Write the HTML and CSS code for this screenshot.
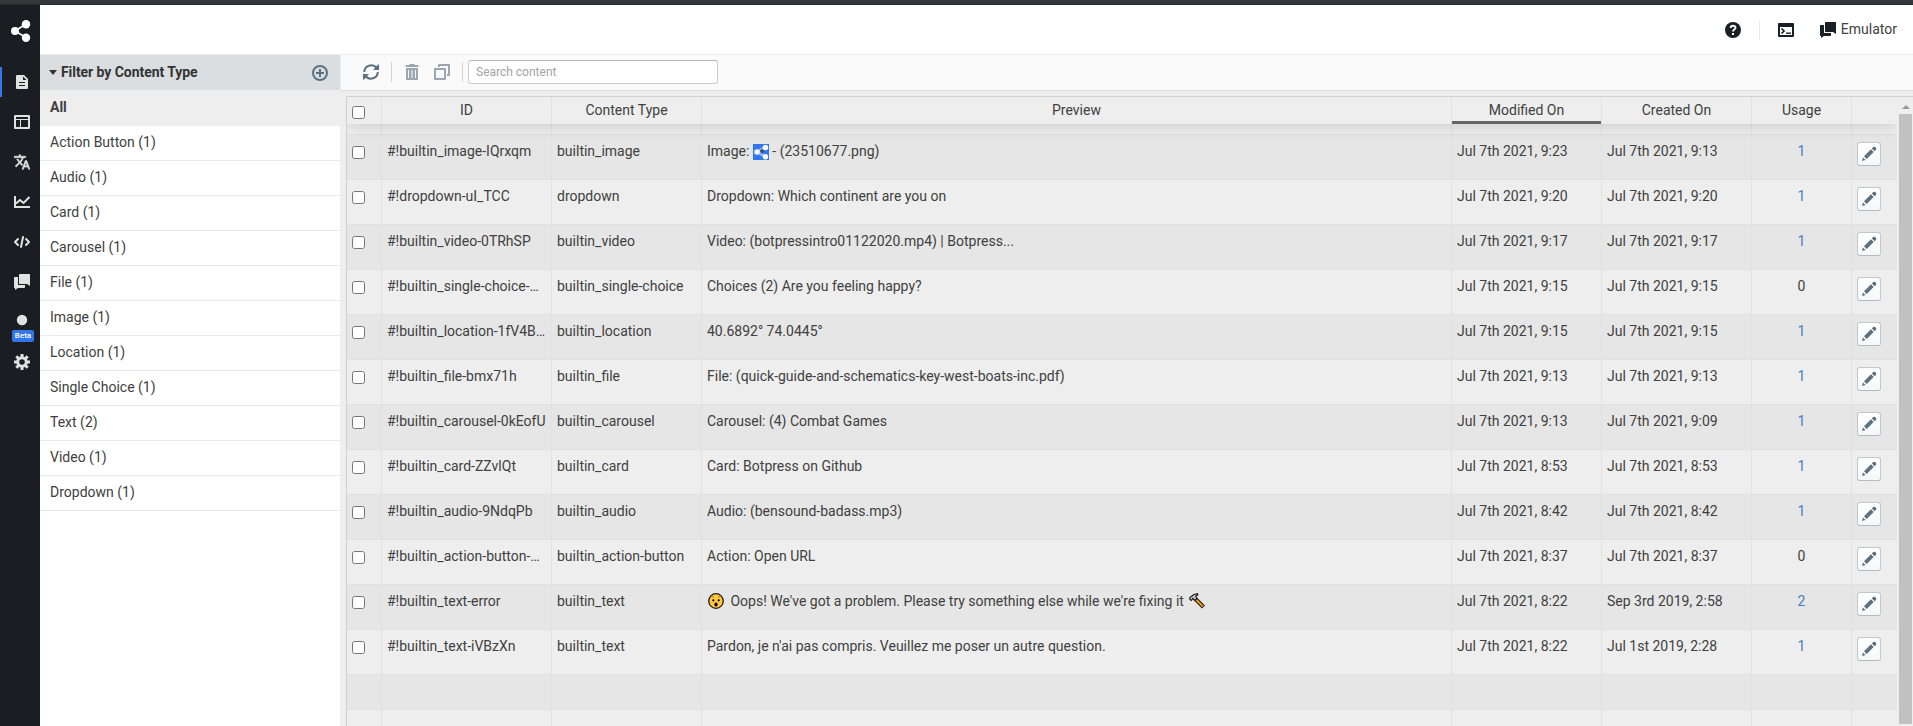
FILE: index.html
```html
<!DOCTYPE html>
<html lang="en">
<head>
<meta charset="utf-8">
<title>Content</title>
<link rel="stylesheet" href="styles.css">
</head>
<body>
<svg class="defs" width="0" height="0">
  <symbol id="pencil" viewBox="0 0 16 16"><path d="M1 15l1-3.600L4.600 14zM3 10.300L10 3.300 12.700 6l-7 7zM10.900 2.400l1.300-1.300c.9-.7 2-.1 2.500.4.400.5 1 1.500.2 2.400l-1.300 1.300z"/></symbol>
  <symbol id="chat" viewBox="0 0 16 16"><path d="M6 0h9.500c.3 0 .5.200.5.500V12l-3-2H6c-.6 0-1-.4-1-1V1c0-.6.400-1 1-1zM4 3v7.500c0 .3.200.5.500.5H11v2c0 .6-.4 1-1 1H4l-3 2v-2c-.6 0-1-.4-1-1V4c0-.6.400-1 1-1z"/></symbol>
</svg>
<div class="topstrip"></div>
<div class="app">
  <nav class="nav">
    <svg class="logo" width="20" height="22" viewBox="0 0 20 22"><path d="M15 4L4 11l11 6.500" fill="none" stroke="#fff" stroke-width="1.500"/><circle cx="4" cy="11" r="4"/><circle cx="15" cy="4.300" r="4.200"/><circle cx="15" cy="17.700" r="4.200"/></svg>
    <a class="item active"><svg width="16" height="16" viewBox="0 0 16 16"><path fill-rule="evenodd" d="M3 1h7l4 4v9q0 1-1 1H3q-1 0-1-1V2q0-1 1-1zM9 2.500V6h3.500zM5 8v1h6V8zM5 11v1h6v-1z"/></svg></a>
    <a class="item"><svg width="16" height="16" viewBox="0 0 16 16"><path fill-rule="evenodd" d="M1 1h14q1 0 1 1v12q0 1-1 1H1q-1 0-1-1V2q0-1 1-1zM2 3v2h12V3zM2 6v7h4V6zM7 6v7h7V6z"/></svg></a>
    <a class="item"><svg width="16" height="16" viewBox="1 2 22 20"><path d="M12.870 15.070l-2.540-2.510.03-.03c1.740-1.940 2.980-4.170 3.710-6.530H17V4h-7V2H8v2H1v2h11.170C11.500 7.920 10.440 9.750 9 11.350 8.070 10.320 7.300 9.190 6.690 8h-2c.73 1.630 1.730 3.170 2.980 4.560l-5.090 5.020L4 19l5-5 3.110 3.110zM18.500 10h-2L12 22h2l1.120-3h4.750L21 22h2zm-2.620 7l1.620-4.330L19.120 17z" stroke="#e1e1e1" stroke-width=".8"/></svg></a>
    <a class="item"><svg width="16" height="16" viewBox="0 0 16 16"><path fill="none" stroke="#e1e1e1" stroke-width="2" d="M1 2v11h15M2 9.500l4-3.500 3.500 3L15.500 3"/></svg></a>
    <a class="item"><svg width="16" height="16" viewBox="0 0 16 16"><path fill="none" stroke="#e1e1e1" stroke-width="2" stroke-linecap="round" stroke-linejoin="round" d="M4 5L1 8l3 3M12 5l3 3-3 3M9 3L7 13"/></svg></a>
    <a class="item"><svg width="16" height="16"><use href="#chat"/></svg></a>
    <a class="item"><svg width="16" height="16" viewBox="0 0 16 16"><circle cx="8" cy="6" r="5.200"/></svg><span class="beta">Beta</span></a>
    <a class="item"><svg width="16" height="16" viewBox="0 0 16 16"><circle cx="8" cy="8" r="4.300" fill="none" stroke="#e1e1e1" stroke-width="3"/><g stroke="#e1e1e1" stroke-width="3"><path d="M8 0v3.500M8 12.500V16M0 8h3.500M12.500 8H16M2.300 2.300l2.500 2.500M11.200 11.200l2.500 2.500M13.700 2.300l-2.500 2.500M4.800 11.200l-2.500 2.500"/></g></svg></a>
  </nav>
  <div class="main">
    <header class="header">
      <svg class="help" width="16" height="16" viewBox="0 0 16 16"><circle cx="8" cy="8" r="8"/><path d="M5.700 6c0-3 4.800-3 4.800-.2C10.500 7.600 8 7.500 8 9.500" fill="none" stroke="#fff" stroke-width="1.900"/><path d="M7 11h2v2H7z" fill="#fff"/></svg>
      <span class="hsep"></span>
      <svg class="console" width="16" height="16" viewBox="0 0 16 16"><path fill-rule="evenodd" d="M1 1h14q1 0 1 1v12q0 1-1 1H1q-1 0-1-1V2q0-1 1-1zM2 5v8h12V5z"/><path d="M3.500 6.500L6 9l-2.500 2.500" fill="none" stroke="#182026" stroke-width="1.700"/><path d="M8 10.500h5v1.400H8z"/></svg>
      <svg class="hchat" width="16" height="16"><use href="#chat"/></svg>
      <span>Emulator</span>
    </header>
    <div class="body">
      <aside class="filter">
        <div class="fhead"><span class="caret"></span><b>Filter by Content Type</b><svg width="16" height="16" viewBox="0 0 16 16" fill="none" stroke="#5c7080" stroke-width="2"><circle cx="8" cy="8" r="7"/><path d="M8 4v8M4 8h8"/></svg></div>
        <div class="all">All</div>
        <div class="ft">Action Button (1)</div>
        <div class="ft">Audio (1)</div>
        <div class="ft">Card (1)</div>
        <div class="ft">Carousel (1)</div>
        <div class="ft">File (1)</div>
        <div class="ft">Image (1)</div>
        <div class="ft">Location (1)</div>
        <div class="ft">Single Choice (1)</div>
        <div class="ft">Text (2)</div>
        <div class="ft">Video (1)</div>
        <div class="ft">Dropdown (1)</div>
      </aside>
      <section class="content">
        <div class="toolbar">
          <svg class="refresh" width="16" height="16" viewBox="0 0 16 16"><path d="M1.200 8A6.800 6.800 0 0 1 13.500 4.200M14.800 8A6.800 6.800 0 0 1 2.500 11.800" fill="none" stroke="#5c7080" stroke-width="2"/><path d="M16 0v6h-6l2-2 2-2.500zM0 16v-6h6l-2 2-2 2.500z"/></svg>
          <span class="tsep"></span>
          <svg class="trash" width="16" height="16" viewBox="0 0 16 16"><path fill-rule="evenodd" d="M6 0h4l1 1h3.500v2h-13V1H5zM2 4h12v11q0 1-1 1H3q-1 0-1-1zM4 6v8h1V6zM7.500 6v8h1V6zM11 6v8h1V6z"/></svg>
          <svg class="dup" width="16" height="16" viewBox="0 0 16 16"><path fill-rule="evenodd" d="M1 4h10q1 0 1 1v10q0 1-1 1H1q-1 0-1-1V5q0-1 1-1zM2 6v8h8V6zM5 0h10q1 0 1 1v10q0 1-1 1h-2v-2h1V2H6v1H4V1q0-1 1-1z"/></svg>
          <span class="tsep t2"></span>
          <input class="search" type="text" placeholder="Search content">
        </div>
        <div class="tablewrap">
          <div class="table">
            <div class="row thead"><div><input type="checkbox"></div><div>ID</div><div>Content Type</div><div>Preview</div><div class="sorted">Modified On</div><div>Created On</div><div>Usage</div><div></div></div>
            <div class="row gap"><div></div><div></div><div></div><div></div><div></div><div></div><div></div><div></div></div>
            <div class="row odd"><div><input type="checkbox"></div><div>#!builtin_image-IQrxqm</div><div>builtin_image</div><div>Image: <svg class="thumb" width="16" height="16" viewBox="0 0 16 16"><path fill="#3276ea" d="M0 0h16v16H0z"/><path d="M12 3.500L4 8l8 4.500" fill="none" stroke="#8fb2f2" stroke-width="3"/><circle cx="4" cy="8" r="2.700" fill="#fff"/><circle cx="12.500" cy="3.500" r="2.700" fill="#fff"/><circle cx="12.500" cy="12.700" r="2.700" fill="#fff"/><circle cx="9" cy="7" r="1.800" fill="#34446c"/></svg> - (23510677.png)</div><div>Jul 7th 2021, 9:23</div><div>Jul 7th 2021, 9:13</div><div><a>1</a></div><div><button class="edit"><svg width="16" height="16"><use href="#pencil"/></svg></button></div></div>
            <div class="row"><div><input type="checkbox"></div><div>#!dropdown-uI_TCC</div><div>dropdown</div><div>Dropdown: Which continent are you on</div><div>Jul 7th 2021, 9:20</div><div>Jul 7th 2021, 9:20</div><div><a>1</a></div><div><button class="edit"><svg width="16" height="16"><use href="#pencil"/></svg></button></div></div>
            <div class="row odd"><div><input type="checkbox"></div><div>#!builtin_video-0TRhSP</div><div>builtin_video</div><div>Video: (botpressintro01122020.mp4) | Botpress...</div><div>Jul 7th 2021, 9:17</div><div>Jul 7th 2021, 9:17</div><div><a>1</a></div><div><button class="edit"><svg width="16" height="16"><use href="#pencil"/></svg></button></div></div>
            <div class="row"><div><input type="checkbox"></div><div>#!builtin_single-choice-…</div><div>builtin_single-choice</div><div>Choices (2) Are you feeling happy?</div><div>Jul 7th 2021, 9:15</div><div>Jul 7th 2021, 9:15</div><div>0</div><div><button class="edit"><svg width="16" height="16"><use href="#pencil"/></svg></button></div></div>
            <div class="row odd"><div><input type="checkbox"></div><div>#!builtin_location-1fV4B…</div><div>builtin_location</div><div>40.6892° 74.0445°</div><div>Jul 7th 2021, 9:15</div><div>Jul 7th 2021, 9:15</div><div><a>1</a></div><div><button class="edit"><svg width="16" height="16"><use href="#pencil"/></svg></button></div></div>
            <div class="row"><div><input type="checkbox"></div><div>#!builtin_file-bmx71h</div><div>builtin_file</div><div>File: (quick-guide-and-schematics-key-west-boats-inc.pdf)</div><div>Jul 7th 2021, 9:13</div><div>Jul 7th 2021, 9:13</div><div><a>1</a></div><div><button class="edit"><svg width="16" height="16"><use href="#pencil"/></svg></button></div></div>
            <div class="row odd"><div><input type="checkbox"></div><div>#!builtin_carousel-0kEofU</div><div>builtin_carousel</div><div>Carousel: (4) Combat Games</div><div>Jul 7th 2021, 9:13</div><div>Jul 7th 2021, 9:09</div><div><a>1</a></div><div><button class="edit"><svg width="16" height="16"><use href="#pencil"/></svg></button></div></div>
            <div class="row"><div><input type="checkbox"></div><div>#!builtin_card-ZZvlQt</div><div>builtin_card</div><div>Card: Botpress on Github</div><div>Jul 7th 2021, 8:53</div><div>Jul 7th 2021, 8:53</div><div><a>1</a></div><div><button class="edit"><svg width="16" height="16"><use href="#pencil"/></svg></button></div></div>
            <div class="row odd"><div><input type="checkbox"></div><div>#!builtin_audio-9NdqPb</div><div>builtin_audio</div><div>Audio: (bensound-badass.mp3)</div><div>Jul 7th 2021, 8:42</div><div>Jul 7th 2021, 8:42</div><div><a>1</a></div><div><button class="edit"><svg width="16" height="16"><use href="#pencil"/></svg></button></div></div>
            <div class="row"><div><input type="checkbox"></div><div>#!builtin_action-button-…</div><div>builtin_action-button</div><div>Action: Open URL</div><div>Jul 7th 2021, 8:37</div><div>Jul 7th 2021, 8:37</div><div>0</div><div><button class="edit"><svg width="16" height="16"><use href="#pencil"/></svg></button></div></div>
            <div class="row odd"><div><input type="checkbox"></div><div>#!builtin_text-error</div><div>builtin_text</div><div><svg class="emoji face" width="20" height="16" viewBox="0 0 20 16"><circle cx="9" cy="8" r="7.300" fill="#ffc83d" stroke="#231f18" stroke-width="1.300"/><path d="M4.500 4.500l2.500-1M13.500 4.500l-2.500-1" stroke="#b88a20"/><circle cx="6.300" cy="7.300" r="1.100"/><circle cx="11.700" cy="7.300" r="1.100"/><ellipse cx="9" cy="11.500" rx="1.600" ry="2.100"/></svg><span> Oops! We've got a problem. Please try something else while we're fixing it </span><svg class="emoji hammer" width="17" height="16" viewBox="0 0 17 16"><path d="M6.500 6l8 8" stroke="#1c1a18" stroke-width="4"/><path d="M7 6.500l7 7" stroke="#f2a010" stroke-width="2"/><path d="M1 6.500L.8 4.500 5 1.500 8.500.7 8.800 2l-2 1 1 2.500-2 2-2-2-1.500 2z" fill="#c8c8cc" stroke="#1c1a18" stroke-width="1.200"/></svg></div><div>Jul 7th 2021, 8:22</div><div>Sep 3rd 2019, 2:58</div><div><a>2</a></div><div><button class="edit"><svg width="16" height="16"><use href="#pencil"/></svg></button></div></div>
            <div class="row"><div><input type="checkbox"></div><div>#!builtin_text-iVBzXn</div><div>builtin_text</div><div>Pardon, je n'ai pas compris. Veuillez me poser un autre question.</div><div>Jul 7th 2021, 8:22</div><div>Jul 1st 2019, 2:28</div><div><a>1</a></div><div><button class="edit"><svg width="16" height="16"><use href="#pencil"/></svg></button></div></div>
            <div class="row odd pad"><div></div><div></div><div></div><div></div><div></div><div></div><div></div><div></div></div>
            <div class="row pad"><div></div><div></div><div></div><div></div><div></div><div></div><div></div><div></div></div>
          </div>
          <div class="scroll"><span class="up"></span><span class="thumbbar"></span></div>
        </div>
      </section>
    </div>
  </div>
</div>
</body>
</html>
```

FILE: styles.css
```css
* { box-sizing: border-box; }
body { margin: 0; height: 726px; overflow: hidden; font: 14px/20px Roboto, sans-serif; color: #404040; background: #fff; display: flex; flex-direction: column; }
.defs { position: absolute; }
svg { flex: none; }
.topstrip { height: 5px; flex: none; background: #353639; border-bottom: 1px solid #27282b; }
.app { flex: 1; display: flex; min-height: 0; }

.nav { width: 40px; flex: none; background: #1a1e22; fill: #e1e1e1; display: flex; flex-direction: column; }
.logo { margin: 15px 0 20px 11px; fill: #fff; }
.item { height: 40px; flex: none; padding-left: 14px; display: flex; align-items: center; position: relative; }
.item.active::before { content: ""; position: absolute; left: 0; top: 5px; width: 2px; height: 30px; background: #3276ea; }
.beta { position: absolute; left: 12px; top: 28px; width: 22px; height: 12px; border-radius: 2px; background: #3276ea; color: #fff; font: 500 8px/12px Roboto, sans-serif; text-align: center; z-index: 1; }

.main { flex: 1; min-width: 0; display: flex; flex-direction: column; }
.header { height: 50px; flex: none; border-bottom: 1px solid #eee; display: flex; justify-content: flex-end; align-items: center; padding-right: 16px; fill: #182026; }
.header > span:last-child { margin-left: 5px; padding-bottom: 1px; }
.hsep { width: 1px; height: 20px; background: #ebebeb; margin: 0 18px; }
.hchat { margin-left: 26px; }

.body { flex: 1; display: flex; min-height: 0; }
.filter { width: 300px; flex: none; background: #fff; }
.fhead { height: 35px; background: #dadee0; display: flex; align-items: center; padding: 0 12px 0 9px; color: #333; }
.fhead b { flex: 1; margin-left: 4px; padding-bottom: 2px; letter-spacing: -.06px; }
.caret { border: 4px solid transparent; border-top: 5px solid #333; border-bottom: 0; }
.all { height: 36px; background: #eee; font-weight: 700; padding: 7px 10px; }
.ft { height: 35px; border-bottom: 1px solid #eaeaea; padding: 6px 10px; }

.content { flex: 1; min-width: 0; background: #eee; display: flex; flex-direction: column; padding-left: 1px; }
.toolbar { height: 36px; flex: none; background: #fafafa; border-bottom: 1px solid #ddd; display: flex; align-items: center; padding: 0 0 1px 22px; fill: #5c7080; }
.tsep { width: 1px; height: 20px; background: #d5d5d5; margin: 0 12px; }
.tsep.t2 { margin: 0 5px 0 12px; }
.trash, .dup { opacity: .6; }
.dup { margin-left: 14px; }
.search { width: 250px; height: 24px; border: 1px solid #ccc; border-top-color: #b4b4b4; border-radius: 3px; padding: 0 7px; font: 12px Roboto, sans-serif; background: #fff; }
.search::placeholder { color: #a0a4a8; opacity: 1; }

.tablewrap { flex: 1; min-height: 0; display: flex; margin: 5px 0 0 5px; border: solid #d2d2d2; border-width: 1px 0 0 1px; overflow: hidden; }
.table { width: 1550px; flex: none; }
.row { display: grid; grid-template-columns: 35px 170px 150px 750px 150px 150px 100px 45px; height: 45px; border-bottom: 1px solid #e0e0e0; background: #eee; }
.row.odd { background: #e6e6e6; }
.row > div { border-right: 1px solid #e2e2e2; padding: 6px 5px 0; white-space: nowrap; overflow: hidden; }
.row > div:last-child { border-right: 0; }
.row > div:nth-child(7) { text-align: center; }
.row input { display: block; width: 13px; height: 13px; margin: 5px 0 0; }
.row.thead { height: 27px; border: 0; box-shadow: 0 2px 15px rgba(0, 0, 0, .15); position: relative; clip-path: inset(0 0 -20px 0); }
.row.thead > div { padding-top: 3px; text-align: center; }
.row.thead input { margin-top: 6px; }
.row.thead .sorted { box-shadow: inset 0 -3px #666; }
.row.gap { height: 11px; }
.row.pad { height: 35px; }
.row a { color: #4580bd; }
.edit { display: flex; align-items: center; justify-content: center; width: 24px; height: 24px; margin-top: 1px; padding: 0; border: 1px solid #c3c7ca; border-bottom-color: #b5babd; border-radius: 3px; background: linear-gradient(#fff, #f5f8fa); fill: #5c7080; }
.thumb { vertical-align: -4px; }
.emoji { vertical-align: -3px; }
.hammer { margin-left: 2px; }
.scroll { flex: 1; padding: 8px 1px 0 2px; display: flex; flex-direction: column; align-items: center; }
.up { border: 4px solid transparent; border-bottom: 4px solid #999; border-top: 0; margin-bottom: 5px; }
.thumbbar { width: 13px; height: 610px; background: #c1c1c1; }
```
